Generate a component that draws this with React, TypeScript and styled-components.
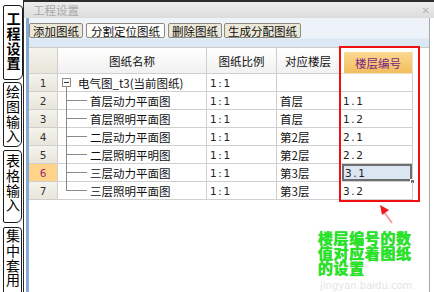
import React from 'react';
import styled, { createGlobalStyle, css } from 'styled-components';

const Global = createGlobalStyle`
  html, body { margin: 0; padding: 0; background: #fff; }
  body { font-family: "Noto Sans CJK SC", "Noto Sans", sans-serif; }
  * { box-sizing: border-box; }
`;

const CJK = `"Noto Sans CJK SC", "Noto Sans", sans-serif`;
const NUM = `"DejaVu Sans", "Liberation Sans", sans-serif`;

const Frame = styled.div`
  position: relative;
  width: 434px;
  height: 292px;
  display: flex;
  overflow: hidden;
  background: #fff;
`;

const SideStrip = styled.div`
  flex: none;
  width: 24px;
  border-right: 1px solid #2a2a2a;
  display: flex;
  flex-direction: column;
  padding-top: 5px;
  background: #fff;
`;

const Tab = styled.div<{ $h: number; $active?: boolean; $gap: number; $pt: number }>`
  flex: none;
  width: ${(p) => (p.$active ? 20 : 19)}px;
  height: ${(p) => p.$h}px;
  margin-left: 3px;
  margin-bottom: ${(p) => p.$gap}px;
  padding-top: ${(p) => p.$pt}px;
  border: 1px solid #1a1a1a;
  border-radius: 2px 4px 6px 2px;
  background: #fff;
  display: flex;
  justify-content: center;
  align-items: flex-start;
  overflow: hidden;
`;

const TabLabel = styled.span<{ $active?: boolean }>`
  writing-mode: vertical-rl;
  text-orientation: upright;
  font-family: ${CJK};
  font-size: 14px;
  line-height: 17px;
  letter-spacing: 0.6px;
  color: #000;
  font-weight: ${(p) => (p.$active ? 700 : 400)};
`;

const Main = styled.div`
  flex: 1;
  display: flex;
  flex-direction: column;
  min-width: 0;
`;

const TitleBar = styled.div`
  flex: none;
  height: 18px;
  border-top: 2px solid #2b2b2b;
  background: linear-gradient(#ededed, #dcdcdc);
  display: flex;
  align-items: center;
  justify-content: space-between;
  padding: 0 4px 0 9px;
  font-family: ${CJK};
  font-size: 11.5px;
  color: #a9a9a9;
`;

const CloseMark = styled.span`
  font-family: ${NUM};
  font-size: 10px;
  color: #b5b5b5;
`;

const Panel = styled.div`
  flex: 1;
  margin-left: 2px;
  margin-right: 4px;
  border-left: 3px solid #86a8d4;
  border-right: 1px solid #a8a8a8;
  display: flex;
  flex-direction: column;
  background: #fff;
`;

const Toolbar = styled.div`
  flex: none;
  height: 29px;
  display: flex;
  align-items: flex-start;
  gap: 2px;
  padding-top: 5px;
  background: linear-gradient(#eef3fa 0, #eef3fa 20px, #dde8f5 21px, #dde8f5 100%);
`;

const ToolButton = styled.div<{ $active?: boolean }>`
  height: 15px;
  padding: 0 3px;
  display: flex;
  align-items: center;
  border: 1px solid #8c8a80;
  border-radius: 2px;
  background: ${(p) => (p.$active ? '#fdfdfb' : '#ece8d8')};
  font-family: ${CJK};
  font-size: 11.5px;
  color: #111;
  white-space: nowrap;
  ${(p) =>
    p.$active &&
    css`
      margin: 0 1px;
      padding: 0 4px;
    `}
`;

const Grid = styled.div`
  display: grid;
  grid-template-columns: 29px 149px 70px 63px 73px;
  grid-auto-rows: 18px;
  grid-template-rows: 26px;
  border-top: 1px solid #c9c9c9;
`;

type CellKind = 'num' | 'head' | 'headNum' | 'headHot' | 'data' | 'numHot';

const Cell = styled.div<{ $kind: CellKind; $selected?: boolean }>`
  position: relative;
  display: flex;
  align-items: center;
  border-right: 1px solid #cfcfcf;
  border-bottom: 1px solid #cfcfcf;
  font-family: ${CJK};
  font-size: 11.5px;
  color: #111;
  white-space: nowrap;
  padding-left: 3px;
  ${(p) =>
    (p.$kind === 'num' || p.$kind === 'headNum') &&
    css`
      justify-content: center;
      padding-left: 0;
      background: linear-gradient(#f4f3ec, #e8e6da);
      font-family: ${NUM};
      font-size: 10.5px;
      color: #333;
    `}
  ${(p) =>
    p.$kind === 'numHot' &&
    css`
      justify-content: center;
      padding-left: 0;
      background: #ffd488;
      font-family: ${NUM};
      font-size: 10.5px;
      color: #9a2a78;
    `}
  ${(p) =>
    p.$kind === 'head' &&
    css`
      justify-content: center;
      padding-left: 0;
      background: linear-gradient(#ffffff, #f1f1f1);
    `}
  ${(p) =>
    p.$kind === 'headHot' &&
    css`
      justify-content: center;
      padding-left: 0;
      background: linear-gradient(#fbd991, #f2bc5c);
      color: #7c1f86;
      border: 1px solid #e8e2cc;
      border-top: 4px solid #ffffff;
      border-left: 4px solid #ffffff;
    `}
  ${(p) =>
    p.$selected &&
    css`
      background: #dce6f2;
      box-shadow: inset 0 0 0 2px #6e6e6e;
      margin-left: 2px;
    `}
`;

const NumText = styled.span`
  font-family: ${NUM};
  font-size: 10.5px;
  letter-spacing: 1.6px;
  color: #222;
`;

const FillHandle = styled.span`
  position: absolute;
  right: -3px;
  bottom: -3px;
  width: 5px;
  height: 5px;
  background: #6e6e6e;
  border: 1px solid #fff;
`;

const Connector = styled.span<{ $pos: 'root' | 'mid' | 'last' }>`
  position: relative;
  flex: none;
  align-self: stretch;
  width: ${(p) => (p.$pos === 'root' ? 17 : 26)}px;
  margin-right: ${(p) => (p.$pos === 'root' ? 0 : 3)}px;
  &::before {
    content: '';
    position: absolute;
    left: 5px;
    width: 0;
    border-left: 1px solid #8a8a8a;
    top: ${(p) => (p.$pos === 'root' ? '13px' : '-1px')};
    bottom: ${(p) => (p.$pos === 'last' ? '8px' : '-1px')};
  }
  &::after {
    content: '';
    display: ${(p) => (p.$pos === 'root' ? 'none' : 'block')};
    position: absolute;
    left: 5px;
    right: 0;
    top: 8px;
    border-top: 1px solid #8a8a8a;
  }
`;

const Collapse = styled.span`
  position: absolute;
  left: 1px;
  top: 4px;
  width: 9px;
  height: 9px;
  border: 1px solid #8a8a8a;
  background: #fff;
  z-index: 1;
  &::after {
    content: '';
    position: absolute;
    left: 1px;
    right: 1px;
    top: 3px;
    border-top: 1px solid #333;
  }
`;

const Highlight = styled.div`
  position: absolute;
  left: 339px;
  top: 46px;
  width: 81px;
  height: 156px;
  border: 2px solid #f01010;
  pointer-events: none;
`;

const Arrow = styled.svg`
  position: absolute;
  left: 370px;
  top: 200px;
`;

const Note = styled.div`
  position: absolute;
  left: 318px;
  top: 230px;
  width: 100px;
  font-family: ${CJK};
  font-weight: 700;
  font-size: 15px;
  line-height: 15px;
  letter-spacing: 0.6px;
  color: #22e822;
  text-shadow: 0 0 1px #18a818;
`;

const WmUrl = styled.div`
  position: absolute;
  left: 320px;
  top: 280px;
  font-family: ${NUM};
  font-size: 10px;
  line-height: 12px;
  color: #e4e4e4;
`;

type Row = { n: number; name: string; scale: string; floor: string; code: string };

const rows: Row[] = [
  { n: 1, name: '电气图_t3(当前图纸)', scale: '1:1', floor: '', code: '' },
  { n: 2, name: '首层动力平面图', scale: '1:1', floor: '首层', code: '1.1' },
  { n: 3, name: '首层照明平面图', scale: '1:1', floor: '首层', code: '1.2' },
  { n: 4, name: '二层动力平面图', scale: '1:1', floor: '第2层', code: '2.1' },
  { n: 5, name: '二层照明平明图', scale: '1:1', floor: '第2层', code: '2.2' },
  { n: 6, name: '三层动力平面图', scale: '1:1', floor: '第3层', code: '3.1' },
  { n: 7, name: '三层照明平面图', scale: '1:1', floor: '第3层', code: '3.2' },
];

const tabs = [
  { label: '工程设置', h: 75, gap: 2, pt: 6, active: true },
  { label: '绘图输入', h: 65, gap: 3, pt: 2 },
  { label: '表格输入', h: 73, gap: 4, pt: 3 },
  { label: '集中套用', h: 70, gap: 0, pt: 1 },
];

export default function App() {
  return (
    <Frame>
      <Global />
      <SideStrip>
        {tabs.map((t) => (
          <Tab key={t.label} $h={t.h} $gap={t.gap} $pt={t.pt} $active={t.active}>
            <TabLabel $active={t.active}>{t.label}</TabLabel>
          </Tab>
        ))}
      </SideStrip>
      <Main>
        <TitleBar>
          <span>工程设置</span>
          <CloseMark>✕</CloseMark>
        </TitleBar>
        <Panel>
          <Toolbar>
            <ToolButton>添加图纸</ToolButton>
            <ToolButton $active>分割定位图纸</ToolButton>
            <ToolButton>删除图纸</ToolButton>
            <ToolButton>生成分配图纸</ToolButton>
          </Toolbar>
          <Grid>
            <Cell $kind="headNum" />
            <Cell $kind="head">图纸名称</Cell>
            <Cell $kind="head">图纸比例</Cell>
            <Cell $kind="head">对应楼层</Cell>
            <Cell $kind="headHot">楼层编号</Cell>
            {rows.map((r, i) => {
              const pos = i === 0 ? 'root' : i === rows.length - 1 ? 'last' : 'mid';
              const sel = r.n === 6;
              return (
                <React.Fragment key={r.n}>
                  <Cell $kind={sel ? 'numHot' : 'num'}>{r.n}</Cell>
                  <Cell $kind="data">
                    <Connector $pos={pos}>{pos === 'root' && <Collapse />}</Connector>
                    {r.name}
                  </Cell>
                  <Cell $kind="data">
                    <NumText>{r.scale}</NumText>
                  </Cell>
                  <Cell $kind="data">{r.floor}</Cell>
                  <Cell $kind="data" $selected={sel}>
                    <NumText>{r.code}</NumText>
                    {sel && <FillHandle />}
                  </Cell>
                </React.Fragment>
              );
            })}
          </Grid>
        </Panel>
      </Main>
      <Highlight />
      <WmUrl>jingyan.baidu.com</WmUrl>
      <Arrow width="30" height="30" viewBox="0 0 30 30">
        <line x1="22" y1="23" x2="14" y2="12" stroke="#f4a0a0" strokeWidth="2" />
        <polygon points="10,5 19,10 12,15" fill="#ee1c1c" />
      </Arrow>
      <Note>楼层编号的数值对应着图纸的设置</Note>
    </Frame>
  );
}
